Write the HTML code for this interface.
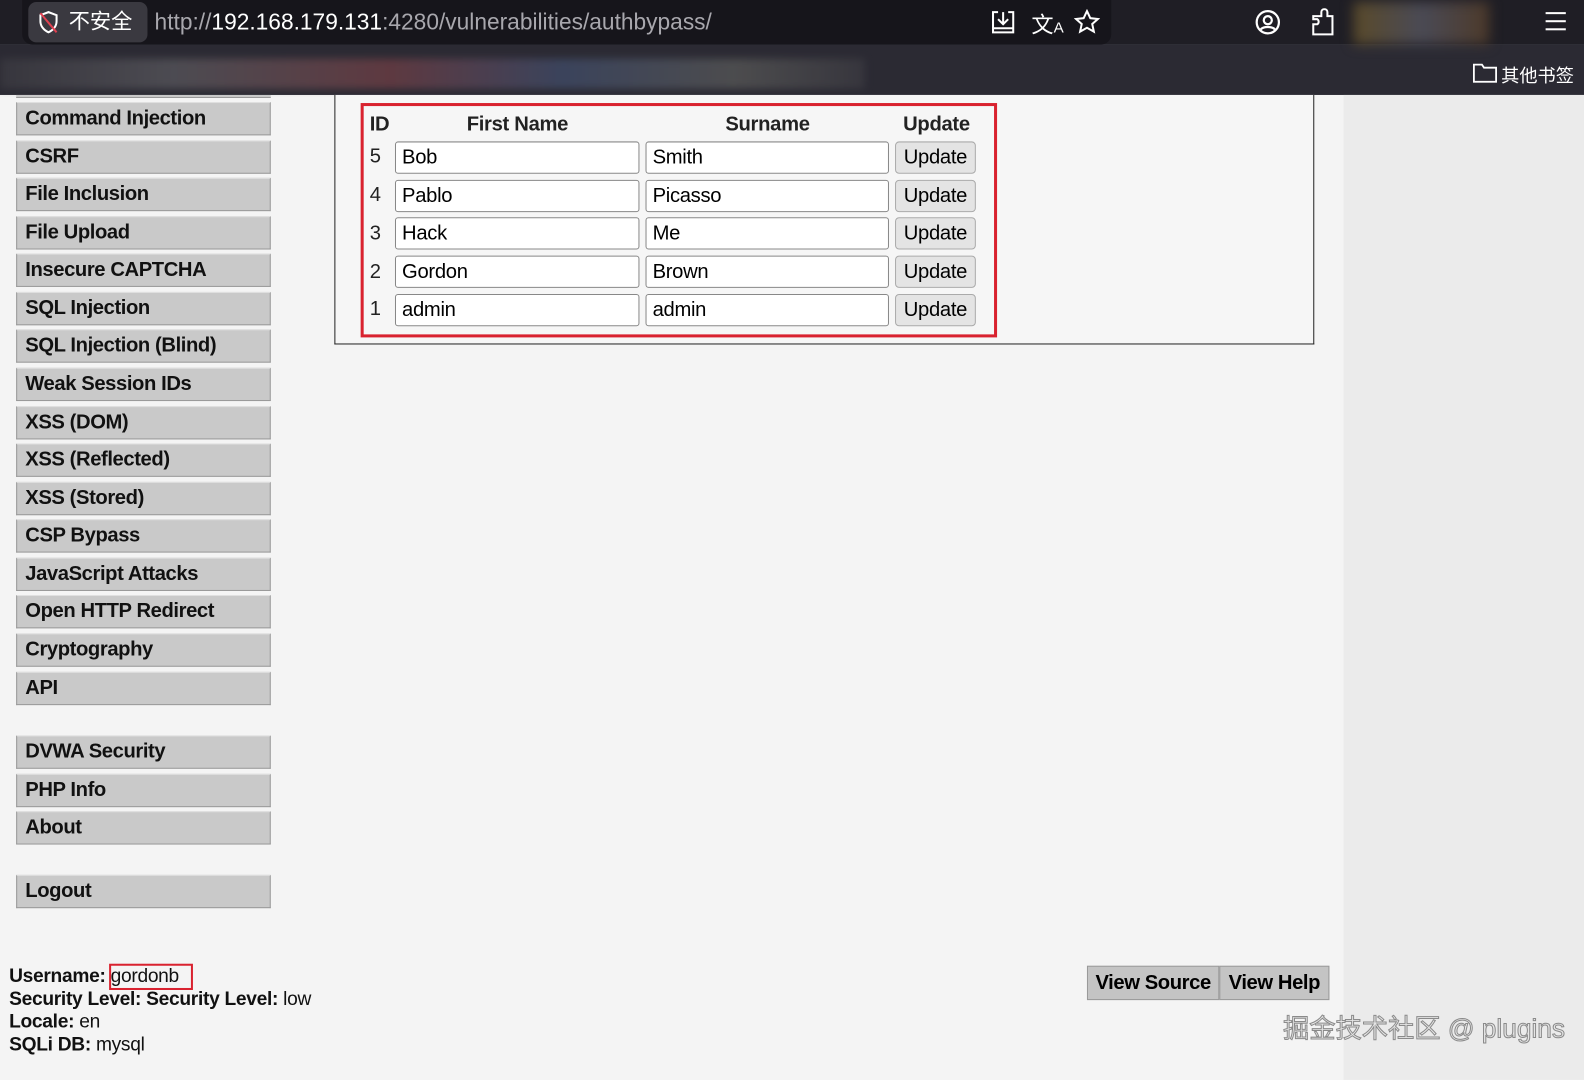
<!DOCTYPE html>
<html><head><meta charset="utf-8"><style>
*{box-sizing:border-box;margin:0;padding:0}
body{width:1584px;height:1069px;overflow:hidden;background:#f4f4f4;font-family:"Liberation Sans","Noto Sans CJK SC",sans-serif;position:relative}
#w{position:absolute;left:0;top:0;width:1568px;height:1059px;transform:scale(1.0102);transform-origin:0 0}
.abs{position:absolute}
.top{left:0;top:0;width:1584px;height:44px;background:#1f1e25}
.bm{left:0;top:44px;width:1584px;height:50px;background:#2b2a33}
.url{left:22px;top:0;width:1078px;height:44px;background:#16151b;border-radius:0 0 10px 10px}
.sec{left:28px;top:2px;width:118px;height:40px;background:#3a3940;border-radius:8px;color:#fff;font-size:21px;line-height:40px;padding-left:40px}
.urltxt{left:153px;top:9px;color:#a8a7ad;font-size:22.5px;white-space:nowrap}
.urltxt b{color:#fff;font-weight:normal}
.blur{left:0;top:58px;width:856px;height:30px;background:linear-gradient(90deg,#3a3940,#55545a 20%,#6b3d44 45%,#3f4a66 65%,#555 85%,#3a3940);filter:blur(4px);opacity:.8}
.menu{left:16px;width:252px;height:33px;background:#c9c9c9;border:1px solid #999;border-top-color:#e0e0e0;font-weight:bold;font-size:20px;letter-spacing:-0.4px;line-height:31px;padding-left:8px;color:#111}
.content{left:331px;top:94px;width:970px;height:247px;border:1px solid #222;border-top:none;background:#f6f6f6}
.red{left:357px;top:102px;width:630px;height:232px;border:3px solid #d9222f}
.th{font-weight:bold;font-size:20px;letter-spacing:-0.3px;top:112px;color:#222}
.inp{height:32px;border:1px solid #888;border-radius:3px;background:#fff;font-size:20px;letter-spacing:-0.3px;line-height:30px;padding-left:6px;color:#000}
.btn{left:886px;width:80px;height:32px;border:1px solid #aaa;border-radius:4px;background:#e4e4e4;font-size:20px;letter-spacing:-0.3px;line-height:30px;text-align:center;color:#000}
.id{left:366px;font-size:20px;color:#222}
.right{left:1330px;top:94px;width:254px;height:975px;background:#ebebeb}
.foot{left:9px;font-size:19px;letter-spacing:-0.3px;color:#111}
.vb{top:956px;height:34px;background:#c4c4c4;border:1px solid #999;font-weight:bold;font-size:20px;letter-spacing:-0.4px;line-height:32px;text-align:center}
</style></head><body><div id="w">
<div class="abs top"></div><div class="abs bm"></div>
<div class="abs url"></div>
<div class="abs sec">不安全</div>
<svg class="abs" style="left:36px;top:10px" width="24" height="24" viewBox="0 0 24 24"><path d="M12 2L4 5v6c0 5 3.5 9 8 11 4.5-2 8-6 8-11V5z" fill="none" stroke="#fff" stroke-width="2"/><path d="M4 3l16 19" stroke="#e04050" stroke-width="2"/></svg>
<div class="abs urltxt">http://<b>192.168.179.131</b>:4280/vulnerabilities/authbypass/</div>
<svg class="abs" style="left:980px;top:9px" width="26" height="26" viewBox="0 0 26 26" fill="none" stroke="#fff" stroke-width="2"><path d="M8 3H3v20h20V3h-5M13 3v12M8 10l5 5 5-5M3 19h20"/></svg>
<div class="abs" style="left:1021px;top:7px;color:#fff;font-size:22px">文<span style="font-size:15px">A</span></div>
<svg class="abs" style="left:1063px;top:9px" width="26" height="26" viewBox="0 0 26 26"><path d="M13 2l3.3 7 7.5.8-5.6 5 1.6 7.5L13 18.5 6.2 22.3l1.6-7.5-5.6-5 7.5-.8z" fill="none" stroke="#fff" stroke-width="2"/></svg>
<svg class="abs" style="left:1242px;top:9px" width="26" height="26" viewBox="0 0 26 26" fill="none" stroke="#fff" stroke-width="2.2"><circle cx="13" cy="13" r="11"/><circle cx="13" cy="11" r="4"/><path d="M6 20c3-3 11-3 14 0"/></svg>
<svg class="abs" style="left:1297px;top:8px" width="26" height="28" viewBox="0 0 26 28" fill="none" stroke="#fff" stroke-width="2"><path d="M3 26V16h4a3 3 0 000-5H3V8h8V4a3 3 0 016 0v4h5v18z"/></svg>
<div class="abs" style="left:1340px;top:2px;width:134px;height:42px;background:linear-gradient(90deg,#5a4a2a,#4a4a55 50%,#4d3a2a);filter:blur(6px)"></div>
<div class="abs" style="left:1530px;top:12px;width:20px;height:18px;border-top:2px solid #fff;border-bottom:2px solid #fff"></div>
<div class="abs" style="left:1530px;top:20px;width:20px;height:2px;background:#fff"></div>
<div class="abs blur"></div>
<svg class="abs" style="left:1458px;top:62px" width="24" height="20" viewBox="0 0 24 20" fill="none" stroke="#fff" stroke-width="1.8"><path d="M1 2h8l2 3h12v14H1z"/></svg>
<div class="abs" style="left:1486px;top:61px;color:#fff;font-size:18px">其他书签</div>

<div class="abs right"></div>
<div class="abs" style="left:16px;top:94px;width:252px;height:3px;background:#c9c9c9;border-bottom:1px solid #999"></div>
<div class="abs menu" style="top:101px">Command Injection</div>
<div class="abs menu" style="top:139px">CSRF</div>
<div class="abs menu" style="top:176px">File Inclusion</div>
<div class="abs menu" style="top:214px">File Upload</div>
<div class="abs menu" style="top:251px">Insecure CAPTCHA</div>
<div class="abs menu" style="top:289px">SQL Injection</div>
<div class="abs menu" style="top:326px">SQL Injection (Blind)</div>
<div class="abs menu" style="top:364px">Weak Session IDs</div>
<div class="abs menu" style="top:402px">XSS (DOM)</div>
<div class="abs menu" style="top:439px">XSS (Reflected)</div>
<div class="abs menu" style="top:477px">XSS (Stored)</div>
<div class="abs menu" style="top:514px">CSP Bypass</div>
<div class="abs menu" style="top:552px">JavaScript Attacks</div>
<div class="abs menu" style="top:589px">Open HTTP Redirect</div>
<div class="abs menu" style="top:627px">Cryptography</div>
<div class="abs menu" style="top:665px">API</div>
<div class="abs menu" style="top:728px">DVWA Security</div>
<div class="abs menu" style="top:766px">PHP Info</div>
<div class="abs menu" style="top:803px">About</div>
<div class="abs menu" style="top:866px">Logout</div>

<div class="abs content"></div>
<div class="abs red"></div>
<div class="abs th" style="left:366px">ID</div>
<div class="abs th" style="left:462px">First Name</div>
<div class="abs th" style="left:718px">Surname</div>
<div class="abs th" style="left:894px">Update</div>

<div class="abs id" style="top:144px">5</div><div class="abs inp" style="left:391px;top:140px;width:242px">Bob</div><div class="abs inp" style="left:639px;top:140px;width:241px">Smith</div><div class="abs btn" style="top:140px">Update</div>
<div class="abs id" style="top:182px">4</div><div class="abs inp" style="left:391px;top:178px;width:242px">Pablo</div><div class="abs inp" style="left:639px;top:178px;width:241px">Picasso</div><div class="abs btn" style="top:178px">Update</div>
<div class="abs id" style="top:220px">3</div><div class="abs inp" style="left:391px;top:215px;width:242px">Hack</div><div class="abs inp" style="left:639px;top:215px;width:241px">Me</div><div class="abs btn" style="top:215px">Update</div>
<div class="abs id" style="top:258px">2</div><div class="abs inp" style="left:391px;top:253px;width:242px">Gordon</div><div class="abs inp" style="left:639px;top:253px;width:241px">Brown</div><div class="abs btn" style="top:253px">Update</div>
<div class="abs id" style="top:295px">1</div><div class="abs inp" style="left:391px;top:291px;width:242px">admin</div><div class="abs inp" style="left:639px;top:291px;width:241px">admin</div><div class="abs btn" style="top:291px">Update</div>

<div class="abs foot" style="top:956px"><b>Username:</b> gordonb</div>
<div class="abs" style="left:108px;top:954px;width:83px;height:26px;border:2px solid #d9222f"></div>
<div class="abs foot" style="top:979px"><b>Security Level: Security Level:</b> low</div>
<div class="abs foot" style="top:1001px"><b>Locale:</b> en</div>
<div class="abs foot" style="top:1024px"><b>SQLi DB:</b> mysql</div>

<div class="abs vb" style="left:1076px;width:131px">View Source</div>
<div class="abs vb" style="left:1207px;width:109px">View Help</div>
<div class="abs" style="left:1270px;top:998px;font-size:26px;color:#e6e6e6;-webkit-text-stroke:1px #8a8a8a">掘金技术社区 @ plugins</div>
</div></body></html>
